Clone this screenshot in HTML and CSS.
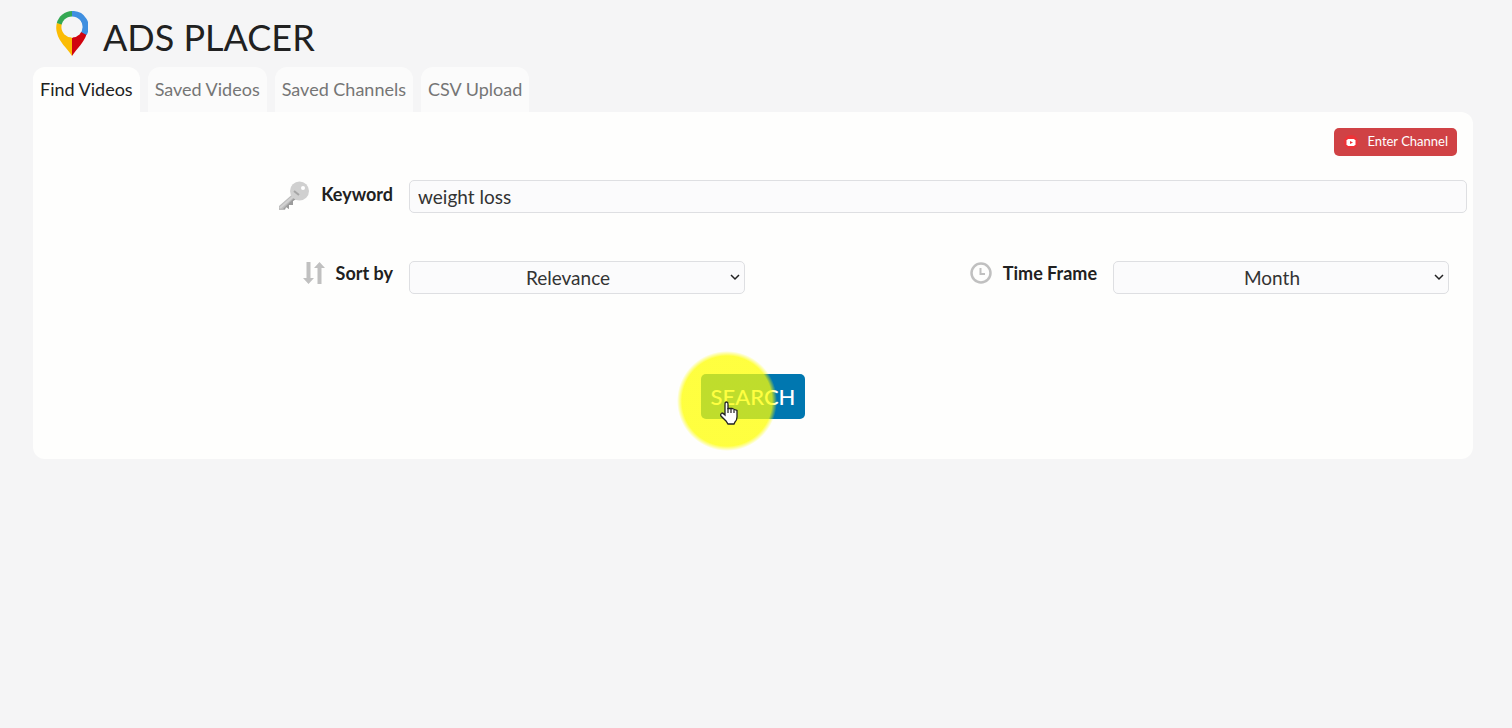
FILE: index.html
```html
<!DOCTYPE html>
<html lang="en">
<head>
  <meta charset="UTF-8">
  <meta name="viewport" content="width=device-width, initial-scale=1.0">
  <title>Ads Placer</title>
  <link rel="stylesheet" href="styles.css">
</head>
<body>
  <header class="brand">
    <svg class="brand-logo" viewBox="0 0 32 46" width="32" height="46" aria-hidden="true">
      <path d="M.8 12C0 15 0 19 1 22C3 31 11 37 16 45V27L6 13Z" fill="#fbbc05"/>
      <path d="M16 45C21 37 28 32 30.600 23L25 20L16 27Z" fill="#d0030f"/>
      <path d="M.8 12A16 16 0 0 1 16 0V7L7 14Z" fill="#34a853"/>
      <path d="M16 0A16 16 0 0 1 30.600 24L25 21V10L16 6Z" fill="#3f8fe0"/>
      <circle cx="16" cy="16" r="10.600" fill="#f5f5f6"/>
    </svg>
    <h1>ADS PLACER</h1>
  </header>

  <nav class="tabs">
    <a href="#find" class="tab active">Find Videos</a>
    <a href="#videos" class="tab">Saved Videos</a>
    <a href="#channels" class="tab">Saved Channels</a>
    <a href="#upload" class="tab">CSV Upload</a>
  </nav>

  <main class="panel">
    <div class="panel-top">
      <button type="button" class="channel-button">
        <svg viewBox="0 0 16 16" width="16" height="16" aria-hidden="true">
          <circle cx="8" cy="9" r="7" fill="#ee3338"/>
          <path d="M5 6h6l1.500 1.500v4L11 13H5L3.500 11.500v-4z" fill="#fff"/>
          <path d="M7 8L10 9.500L7 11z" fill="#ee3338"/>
        </svg>
        Enter Channel
      </button>
    </div>

    <form class="search-form">
      <div class="row row-keyword">
        <label for="keyword">
          <svg viewBox="0 0 32 32" width="32" height="32" aria-hidden="true">
            <path d="M17 14L1 28V32H7L8 29L11 31V27H15V23L21 19Z" fill="#bdbdbd"/>
            <path d="M19 17L5 31H7L8 29L11 31V27H15V23L21 19Z" fill="#9c9c9c"/>
            <path d="M18 16L2 30" stroke="#d2d2d2" stroke-width="2"/>
            <circle cx="21.500" cy="13" r="9.500" fill="#d0d0d0"/>
            <path d="M16 13L21 17" stroke="#a5a5a5" stroke-width="2"/>
            <circle cx="25" cy="10" r="2" fill="#fff"/>
          </svg>
          Keyword
        </label>
        <input type="text" id="keyword" class="field" value="weight loss">
      </div>
      <div class="row">
        <label for="sort">
          <svg viewBox="0 0 22 24" width="22" height="24" aria-hidden="true">
            <path d="M3.500 1H7.500V17H11L5.500 23L0 17H3.500Z" fill="#c0c0c0"/>
            <path d="M14.500 23H18.500V7H22L16.500 1L11 7H14.500Z" fill="#c0c0c0"/>
          </svg>
          Sort by
        </label>
        <select id="sort" class="field">
          <option>Relevance</option>
          <option>Date</option>
          <option>View Count</option>
        </select>
        <label for="timeframe">
          <svg viewBox="0 0 22 22" width="22" height="22" fill="none" stroke="#c0c0c0" aria-hidden="true">
            <circle cx="11" cy="11" r="9.500" stroke-width="2.500"/>
            <path d="M10.500 6V12H15" stroke-width="2"/>
          </svg>
          Time Frame
        </label>
        <select id="timeframe" class="field">
          <option>Month</option>
          <option>Week</option>
          <option>Year</option>
        </select>
      </div>
      <div class="actions">
        <button type="button" class="search-button">SEARCH</button>
        <!-- Click highlight and pointer -->
        <span class="highlight"></span>
        <svg class="pointer" viewBox="0 0 18 24" width="18" height="24" aria-hidden="true">
          <path d="M5 14V3Q5 1 6.500 1Q8 1 8 3V7.500H12L14.500 8.500L17 9.500V16Q17 19 15 21L14 23H8L6 20L1 15Q0 13 2 12Q3 12 5 14Z" fill="#fff" stroke="#222" stroke-width="1.300"/>
          <path d="M8 7V12M11 8V12M14 9V12" stroke="#222" stroke-width="1.200"/>
        </svg>
      </div>
    </form>
  </main>
</body>
</html>
```
FILE: styles.css
```css
* {
  box-sizing: border-box;
}
body {
  margin: 0;
  padding: 0 39px 0 33px;
  background: #f5f5f6;
  color: #212121;
  font-family: Lato, sans-serif;
  font-size: 18px;
}
.brand {
  display: flex;
  align-items: flex-start;
  gap: 15px;
  height: 67px;
  padding: 11px 23px 0;
}
.brand h1 {
  margin: 2px 0 0;
  font-size: 36px;
  font-weight: 400;
  line-height: 48px;
}
.tabs {
  display: flex;
  gap: 8px;
}
.tab {
  padding: 0 7px;
  border-radius: 12px 12px 0 0;
  background: #fbfbfb;
  color: #757575;
  line-height: 45px;
  text-decoration: none;
}
.tab.active {
  background: #fefefd;
  color: #212121;
}
.panel {
  padding: 16px 16px 40px;
  border-radius: 0 12px 12px 12px;
  background: #fefefd;
}
.panel-top {
  display: flex;
  justify-content: flex-end;
  margin-bottom: 24px;
}
.channel-button {
  display: flex;
  align-items: center;
  gap: 8px;
  height: 28px;
  padding: 0 9px 2px;
  border: none;
  border-radius: 5px;
  background: #d04245;
  color: #fff;
  font-family: inherit;
  font-size: 13px;
}
.row {
  display: grid;
  grid-template-columns: 1fr 1fr 1fr 1fr;
  margin-bottom: 48px;
}
.row-keyword {
  grid-template-columns: 1fr 3fr;
}
.row label {
  display: flex;
  justify-content: flex-end;
  align-items: center;
  gap: 11px;
  height: 23px;
  padding-right: 8px;
  font-weight: 700;
}
.row-keyword label {
  height: 27px;
}
.field {
  height: 33px;
  margin: 0 8px;
  padding: 0 8px;
  border: 1px solid #dedfe2;
  border-radius: 5px;
  background: #fbfbfc;
  color: #333;
  font-family: inherit;
  font-size: 19px;
}
.row-keyword .field {
  margin-right: -10px;
}
select.field {
  appearance: none;
  padding: 0 18px 0 0;
  background: #fbfbfc url("data:image/svg+xml,%3Csvg xmlns='http://www.w3.org/2000/svg' width='10' height='7'%3E%3Cpath d='M1 1l4 4 4-4' fill='none' stroke='%23222' stroke-width='1.500'/%3E%3C/svg%3E") no-repeat right 4px center;
  text-align: center;
}
.actions {
  display: flex;
  justify-content: center;
  position: relative;
  margin-top: 80px;
}
.search-button {
  height: 45px;
  padding: 0 10px;
  border: none;
  border-radius: 5px;
  background: #0077b0;
  color: #fff;
  font-family: inherit;
  font-size: 22px;
  font-weight: 500;
}
/* Overlays sit relative to the middle of the search button */
.highlight {
  position: absolute;
  top: -23px;
  left: calc(50% - 76px);
  width: 100px;
  height: 100px;
  border-radius: 50%;
  background: radial-gradient(circle closest-side, rgba(255, 255, 0, 0.75) 90%, rgba(255, 255, 0, 0));
  pointer-events: none;
}
.pointer {
  position: absolute;
  top: 27px;
  left: calc(50% - 33px);
  pointer-events: none;
}
```
